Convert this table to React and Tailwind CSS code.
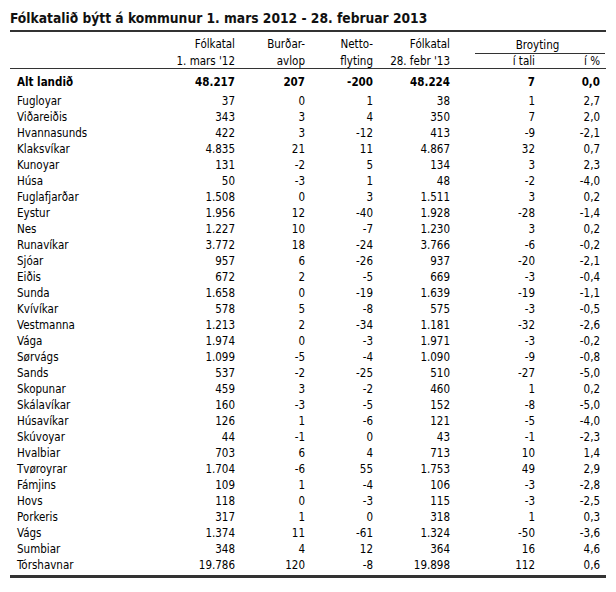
import React from 'react';

const rows = [
  ['Fugloyar', '37', '0', '1', '38', '1', '2,7'],
  ['Viðareiðis', '343', '3', '4', '350', '7', '2,0'],
  ['Hvannasunds', '422', '3', '-12', '413', '-9', '-2,1'],
  ['Klaksvíkar', '4.835', '21', '11', '4.867', '32', '0,7'],
  ['Kunoyar', '131', '-2', '5', '134', '3', '2,3'],
  ['Húsa', '50', '-3', '1', '48', '-2', '-4,0'],
  ['Fuglafjarðar', '1.508', '0', '3', '1.511', '3', '0,2'],
  ['Eystur', '1.956', '12', '-40', '1.928', '-28', '-1,4'],
  ['Nes', '1.227', '10', '-7', '1.230', '3', '0,2'],
  ['Runavíkar', '3.772', '18', '-24', '3.766', '-6', '-0,2'],
  ['Sjóar', '957', '6', '-26', '937', '-20', '-2,1'],
  ['Eiðis', '672', '2', '-5', '669', '-3', '-0,4'],
  ['Sunda', '1.658', '0', '-19', '1.639', '-19', '-1,1'],
  ['Kvívíkar', '578', '5', '-8', '575', '-3', '-0,5'],
  ['Vestmanna', '1.213', '2', '-34', '1.181', '-32', '-2,6'],
  ['Vága', '1.974', '0', '-3', '1.971', '-3', '-0,2'],
  ['Sørvágs', '1.099', '-5', '-4', '1.090', '-9', '-0,8'],
  ['Sands', '537', '-2', '-25', '510', '-27', '-5,0'],
  ['Skopunar', '459', '3', '-2', '460', '1', '0,2'],
  ['Skálavíkar', '160', '-3', '-5', '152', '-8', '-5,0'],
  ['Húsavíkar', '126', '1', '-6', '121', '-5', '-4,0'],
  ['Skúvoyar', '44', '-1', '0', '43', '-1', '-2,3'],
  ['Hvalbiar', '703', '6', '4', '713', '10', '1,4'],
  ['Tvøroyrar', '1.704', '-6', '55', '1.753', '49', '2,9'],
  ['Fámjins', '109', '1', '-4', '106', '-3', '-2,8'],
  ['Hovs', '118', '0', '-3', '115', '-3', '-2,5'],
  ['Porkeris', '317', '1', '0', '318', '1', '0,3'],
  ['Vágs', '1.374', '11', '-61', '1.324', '-50', '-3,6'],
  ['Sumbiar', '348', '4', '12', '364', '16', '4,6'],
  ['Tórshavnar', '19.786', '120', '-8', '19.898', '112', '0,6'],
];

const grid = 'grid grid-cols-[160px_65px_70px_68px_77px_85px_65px]';

const Row = ({ cells, className = '' }) => (
  <div className={`${grid} ${className}`}>
    <div className="pl-[7px] text-left">{cells[0]}</div>
    {cells.slice(1).map((c, i) => (
      <div key={i} className="text-right">{c}</div>
    ))}
  </div>
);

export default function App() {
  return (
    <div className="w-[616px] h-[592px] bg-white text-black font-['DejaVu_Sans_Condensed','DejaVu_Sans',sans-serif] font-stretch-condensed">
      <div className="pl-[10px] pt-[9px] h-[30px] text-[13.7px] leading-[18px] font-bold text-[#111]">
        Fólkatalið býtt á kommunur 1. mars 2012 - 28. februar 2013
      </div>

      <div className="ml-[10px] w-[596px] pr-[6px] border-t-2 border-b-[3px] border-[#333] pb-[2px] text-[11.5px] leading-[16px]">
        {/* header */}
        <div className="border-b border-[#333] mr-[-6px] pr-[6px]">
          <div className={`${grid} h-[20px] items-center pt-[2px]`}>
            <div />
            <div className="text-right">Fólkatal</div>
            <div className="text-right">Burðar-</div>
            <div className="text-right">Netto-</div>
            <div className="text-right">Fólkatal</div>
            <div className="col-span-2 ml-[25px] mr-[-5px] h-[20px] flex items-center justify-center border-b border-[#333] pr-[5px] pt-[2px]">
              Broyting
            </div>
          </div>
          <div className={`${grid} h-[16px] items-start pt-[3px] leading-[13px]`}>
            <div />
            <div className="text-right">1. mars '12</div>
            <div className="text-right">avlop</div>
            <div className="text-right">flyting</div>
            <div className="text-right">28. febr '13</div>
            <div className="text-right">í tali</div>
            <div className="text-right">í %</div>
          </div>
        </div>

        <Row
          cells={['Alt landið', '48.217', '207', '-200', '48.224', '7', '0,0']}
          className="h-[24px] items-center font-bold pt-[1px]"
        />
        {rows.map((r) => (
          <Row key={r[0]} cells={r} className="h-[16px] items-center" />
        ))}
      </div>
    </div>
  );
}
